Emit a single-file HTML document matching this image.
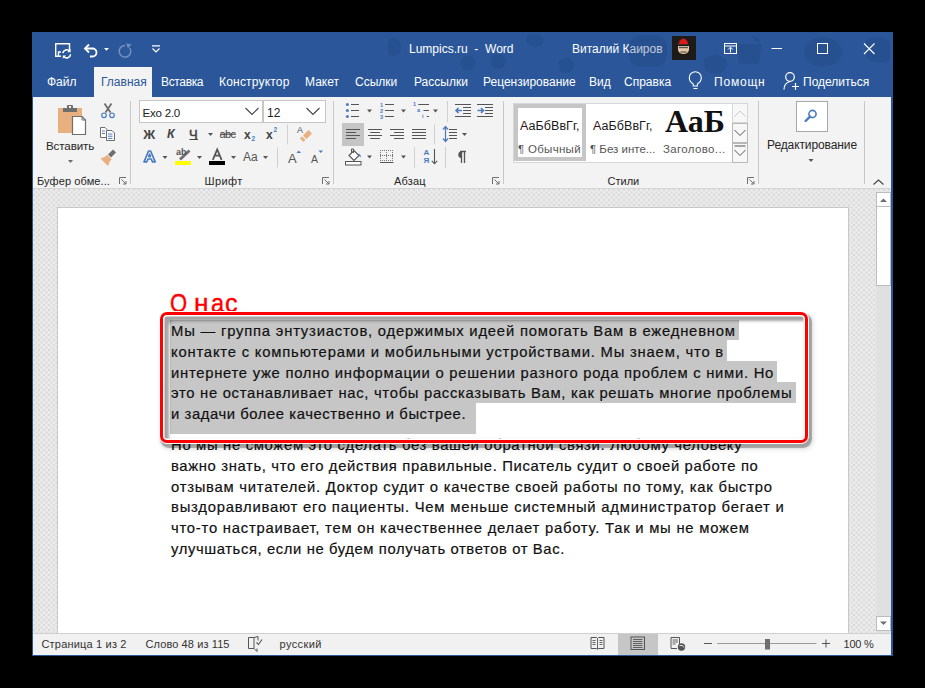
<!DOCTYPE html>
<html><head><meta charset="utf-8">
<style>
*{margin:0;padding:0;box-sizing:border-box}
html,body{width:925px;height:688px;overflow:hidden;background:#000;font-family:"Liberation Sans",sans-serif}
.a{position:absolute}
.t{position:absolute;white-space:nowrap;line-height:1}
#win{position:absolute;left:32px;top:32px;width:861px;height:624px;background:#2b579a;overflow:hidden}
svg{position:absolute;overflow:visible}
.L{font-size:14.8px;color:#111;transform-origin:0 0;-webkit-text-stroke:0.2px #111}
</style></head><body>
<div id="win"></div>

<!-- title bar -->
<div class="a" style="left:32px;top:32px;width:861px;height:65px;background:#2b579a"></div>
<div class="t" style="left:409px;top:43px;font-size:12px;color:#fff">Lumpics.ru&nbsp; -&nbsp; Word</div>
<div class="t" style="left:572px;top:43px;font-size:12px;color:#fff">Виталий Каиров</div>



<!-- title doodles -->
<svg style="left:0;top:0" width="925" height="688">
 <g fill="#1c3f78" opacity="0.28">
  <path d="M388 42 q3 -6 8 -3 q6 2 5 9 q-1 8 -7 8 q-8 0 -6 -14z"/>
  <path d="M462 58 q6 -5 12 0 q3 6 -1 11 q-6 3 -11 -1 q-3 -5 0 -10z"/>
  <path d="M492 56 q7 -4 13 1 q2 7 -2 11 q-7 2 -11 -2 q-2 -5 0 -10z"/>
  <path d="M528 35 q8 -3 14 2 q3 6 -2 9 q-7 3 -12 -2 q-3 -4 0 -9z"/>
  <path d="M560 60 q6 -4 12 0 q4 6 -1 12 q-6 3 -11 -1 q-3 -5 0 -11z"/>
  <rect x="629" y="35" width="38" height="32" rx="12"/>
  <path d="M705 58 q10 -6 20 0 q4 8 -2 14 q-9 4 -17 -1 q-4 -6 -1 -13z"/>
  <path d="M736 44 h26 l-3 20 h-20 z M752 36 q6 0 8 6 h-4 q-2 -3 -4 -6z"/>
  <ellipse cx="823" cy="52" rx="19" ry="15"/>
  <path d="M866 40 q12 -6 24 2 v18 q-12 6 -24 -2 z"/>
 </g>
</svg>

<!-- ===== QAT + title icons ===== -->
<svg style="left:0;top:0" width="925" height="688">
 <g fill="none" stroke="#fff" stroke-width="1.4">
  <!-- save w/ sync -->
  <path d="M61 56.3 H55.7 V43.7 H69.5 V50"/>
    <path d="M58.5 56.5 V52 H61"/>
 </g>
 <g fill="none" stroke="#fff" stroke-width="1.6">
  <path d="M62.8 53.2 a3.9 3.9 0 0 1 6.9 -2"/>
  <path d="M70.6 54.4 a3.9 3.9 0 0 1 -6.9 2"/>
 </g>
 <path d="M70.6 48.8 v3.4 h-3.4z M62.8 58.8 v-3.4 h3.4z" fill="#fff"/>
 <!-- undo -->
 <path d="M85.5 48.5 H92.5 a4 4 0 0 1 0 8 H90" fill="none" stroke="#fff" stroke-width="1.8"/>
 <path d="M89 44.5 L85 48.5 L89 52.5" fill="none" stroke="#fff" stroke-width="1.8"/>
 <path d="M104 48h5l-2.5 2.8z" fill="#fff"/>
 <!-- redo disabled -->
 <path d="M125 45.5 a5.8 5.8 0 1 0 4.8 2.6" fill="none" stroke="#6f8fc0" stroke-width="1.6"/>
 <path d="M126 43.2 L131.5 44.5 L128 48.5 Z" fill="#6f8fc0"/>
 <!-- customize -->
 <path d="M152 45.8h8M152.5 48.5 L156 52 L159.5 48.5" fill="none" stroke="#fff" stroke-width="1.2"/>
 <!-- avatar -->
 <rect x="672" y="36" width="24" height="24" fill="#1e1a18"/>
 <path d="M679 40 q4 -2 8 0 l2 5 h-12z" fill="#3a2a2a"/>
 <path d="M679 44 q1 -5 4.5 -5.5 q3.5 0.5 4.5 5.5z" fill="#e01818"/>
 <path d="M678 46 h11 v4 q-1 4 -5.5 4 q-4.5 0 -5.5 -4z" fill="#e6c8a8"/>
 <path d="M679 47.5h9" stroke="#555" stroke-width="1.4"/>
 <path d="M680.5 52h6" stroke="#3a3a3a" stroke-width="1"/>
 <!-- ribbon display options -->
 <rect x="724.5" y="43.5" width="12" height="10" fill="none" stroke="#fff" stroke-width="1"/>
 <path d="M724.5 46h12M730.5 52.5v-5M728.2 49.5l2.3 -2.3 2.3 2.3" fill="none" stroke="#fff" stroke-width="1"/>
 <!-- min / max / close -->
 <path d="M771.5 48.5h10.5" stroke="#fff" stroke-width="1"/>
 <rect x="817.5" y="43.5" width="10" height="10" fill="none" stroke="#fff" stroke-width="1"/>
 <path d="M864 43.5 L874.5 54 M874.5 43.5 L864 54" stroke="#fff" stroke-width="1.1"/>
 <!-- lightbulb -->
 <path d="M693.2 86 v-2 q-3.9 -2.6 -3.9 -6.3 a6 6 0 0 1 12 0 q0 3.7 -3.9 6.3 v2 z" fill="none" stroke="#fff" stroke-width="1.1"/>
 <path d="M693.5 88.5h4" stroke="#fff" stroke-width="1.1"/>
 <!-- person -->
 <circle cx="790" cy="77" r="4.3" fill="none" stroke="#fff" stroke-width="1.2"/>
 <path d="M784 89.5 q0 -6.5 6 -8" fill="none" stroke="#fff" stroke-width="1.2"/>
 <path d="M795.5 83v7M792 86.5h7" stroke="#fff" stroke-width="1.2"/>
</svg>

<!-- tabs -->
<div class="a" style="left:94px;top:67px;width:58px;height:31px;background:#f3f3f3"></div>
<div class="t" style="left:47px;top:76px;font-size:12px;color:#fff">Файл</div>
<div class="t" style="left:101px;top:76px;font-size:12px;color:#2b579a">Главная</div>
<div class="t" style="left:161px;top:76px;font-size:12px;color:#fff;letter-spacing:-0.35px">Вставка</div>
<div class="t" style="left:219px;top:76px;font-size:12px;color:#fff;letter-spacing:0.2px">Конструктор</div>
<div class="t" style="left:305px;top:76px;font-size:12px;color:#fff">Макет</div>
<div class="t" style="left:355px;top:76px;font-size:12px;color:#fff">Ссылки</div>
<div class="t" style="left:414px;top:76px;font-size:12px;color:#fff">Рассылки</div>
<div class="t" style="left:483px;top:76px;font-size:12px;color:#fff">Рецензирование</div>
<div class="t" style="left:589px;top:76px;font-size:12px;color:#fff">Вид</div>
<div class="t" style="left:624px;top:76px;font-size:12px;color:#fff">Справка</div>
<div class="t" style="left:714px;top:76px;font-size:12px;color:#fff;letter-spacing:0.8px">Помощн</div>
<div class="t" style="left:803px;top:76px;font-size:12px;color:#fff">Поделиться</div>

<!-- ribbon -->
<div class="a" style="left:33px;top:97px;width:858px;height:92px;background:#f3f3f3"></div>


<!-- ===== clipboard group ===== -->
<svg style="left:0;top:0" width="925" height="688">
 <!-- paste -->
 <rect x="58" y="108" width="24" height="25" fill="#e8b07f"/>
 <rect x="63" y="108" width="14" height="4" fill="#6e6e6e"/>
 <rect x="67" y="105" width="6" height="4" rx="1" fill="#6e6e6e"/>
 <rect x="69" y="106" width="2" height="2" fill="#f3f3f3"/>
 <path d="M72.5 116.5 H82 L85.5 120 V134.5 H72.5 Z" fill="#fff" stroke="#6e6e6e" stroke-width="1.2"/>
 <path d="M82 116.5 V120 H85.5" fill="none" stroke="#6e6e6e" stroke-width="1"/>
 <path d="M68 160 h5 l-2.5 3 z" fill="#6e6e6e"/>
 <!-- scissors -->
 <path d="M104.5 103.5 L110.5 112.5 M111.5 103.5 L105.5 112.5" stroke="#6e6e6e" stroke-width="1.8"/>
 <circle cx="104" cy="115.3" r="2.3" fill="none" stroke="#4a7bbf" stroke-width="1.2"/>
 <circle cx="112" cy="115.3" r="2.3" fill="none" stroke="#4a7bbf" stroke-width="1.2"/>
 <!-- copy -->
 <path d="M100.5 127.5 H105 L107.5 130 V137.5 H100.5 Z" fill="#fff" stroke="#6e6e6e" stroke-width="1"/>
 <path d="M106.5 130.5 H112 L114.5 133 V140.5 H106.5 Z" fill="#fff" stroke="#6e6e6e" stroke-width="1"/>
 <path d="M102 131h3M102 133.5h3M108 134h4.5M108 136.2h4.5M108 138.4h4.5" stroke="#4a7bbf" stroke-width="1"/>
 <!-- format painter -->
 <path d="M108 154.5 L113 149.6 L116 152.6 L111 157.5 Z" fill="#6e6e6e"/>
 <path d="M100.5 158.5 L105.5 156.5 L107 154.8 L111.7 159.5 L110 161 L108 166 Z" fill="#e8b07f"/>
 <!-- separators -->
 <path d="M130.5 101v83M333.5 101v83M503.5 101v83M758.5 101v83M864.5 101v83" stroke="#c8c8c8" stroke-width="1"/>
 <!-- launchers -->
 <g fill="none" stroke="#6e6e6e" stroke-width="1">
  <path d="M119.5 184V177.5H126"/><path d="M121.5 179.5L126 184M126 181v3h-3"/>
  <path d="M322.5 184V177.5H329"/><path d="M324.5 179.5L329 184M329 181v3h-3"/>
  <path d="M492.5 184V177.5H499"/><path d="M494.5 179.5L499 184M499 181v3h-3"/>
  <path d="M747.5 184V177.5H754"/><path d="M749.5 179.5L754 184M754 181v3h-3"/>
 </g>
 <!-- collapse ribbon -->
 <path d="M873.5 184.5 L878.5 180 L883.5 184.5" fill="none" stroke="#444" stroke-width="1.1"/>
</svg>
<div class="t" style="left:46px;top:140.3px;font-size:11.6px;color:#262626;letter-spacing:-0.12px">Вставить</div>
<div class="t" style="left:37px;top:176px;font-size:11px;color:#262626;letter-spacing:0.1px">Буфер обме...</div>
<div class="t" style="left:204.5px;top:176px;font-size:11px;color:#262626;letter-spacing:0.4px">Шрифт</div>
<div class="t" style="left:394px;top:176px;font-size:11px;color:#262626;letter-spacing:0.2px">Абзац</div>
<div class="t" style="left:607.5px;top:176px;font-size:11px;color:#262626;letter-spacing:0px">Стили</div>
<div class="t" style="left:767px;top:138.5px;font-size:12px;color:#262626;letter-spacing:-0.1px">Редактирование</div>


<!-- ===== font group ===== -->
<div class="a" style="left:139px;top:100px;width:124px;height:23px;background:#fff;border:1px solid #c6c6c6"></div>
<div class="a" style="left:263px;top:100px;width:63px;height:23px;background:#fff;border:1px solid #c6c6c6;border-left:1px solid #c6c6c6"></div>
<div class="t" style="left:142.5px;top:106.8px;font-size:11.6px;color:#222;letter-spacing:-0.25px">Exo 2.0</div>
<div class="t" style="left:267px;top:106.8px;font-size:12px;color:#222">12</div>
<svg style="left:0;top:0" width="925" height="688">
 <path d="M245.5 108 L252 114.5 L258.5 108 M306.5 108 L313 114.5 L319.5 108" fill="none" stroke="#444" stroke-width="1.1"/>
 <!-- dropdown arrows row2/3 -->
 <g fill="#555">
  <path d="M208 133h5l-2.5 3z"/>
  <path d="M162.5 156h5l-2.5 3z"/><path d="M197 156h5l-2.5 3z"/><path d="M231 156h5l-2.5 3z"/><path d="M263 156h5l-2.5 3z"/>
  <path d="M367 109.5h5l-2.5 3z"/><path d="M401 109.5h5l-2.5 3z"/><path d="M433 109.5h5l-2.5 3z"/>
  <path d="M462 133h5l-2.5 3z"/><path d="M367 155.5h5l-2.5 3z"/><path d="M401 155.5h5l-2.5 3z"/>
  <path d="M808.5 159h5l-2.5 3z"/>
 </g>
 <!-- small separators -->
 <path d="M287.5 124.5v20M277.5 147.5v20M447.5 101v21M434.5 124.5v20M414.5 147v21M445.5 147v21" stroke="#d0d0d0" stroke-width="1"/>
 <!-- underline Ч -->
 <path d="M189.5 139.5h8.5" stroke="#444" stroke-width="1"/>
 <!-- strikethrough -->
 <path d="M220 134.2h16" stroke="#444" stroke-width="1"/>
 <!-- highlight -->
 <rect x="175" y="161" width="16" height="4" fill="#ffff00"/>
 <path d="M180 159.5 L189.5 150.5" stroke="#6e6e6e" stroke-width="2.8"/>
 <!-- font color -->
 <rect x="209" y="161" width="16" height="4" fill="#000"/>
 <path d="M212.8 159.8 L217.2 149.5 L221.6 159.8 M214.6 155.6h5.2" fill="none" stroke="#555" stroke-width="1.8"/>
 <!-- text effects A -->
 <path d="M144 161.8 L148.6 151 H150.6 L155.2 161.8 H152.4 L151.3 159 H147.9 L146.8 161.8 Z M148.7 156.6 H150.5 L149.6 154.2 Z" fill="#fff" stroke="#4a7bbf" stroke-width="1.7" stroke-linejoin="round"/>
 <!-- grow / shrink triangles -->
 <path d="M296.5 153h4.5l-2.25-2.6z" fill="#4a7bbf"/>
 <path d="M318.5 150.4h4.5l-2.25 2.6z" fill="#4a7bbf"/>
 <!-- clear formatting eraser -->
 <path d="M303 135.5 L308.5 130 L312 133.5 L306.5 139 Z" fill="#e8b07f"/>
 <path d="M300 138.5 L302 136.5 L305.5 140 L303.5 142 Z" fill="#e8b07f"/>
</svg>
<div class="t" style="left:143.3px;top:127.6px;font-size:13.2px;font-weight:bold;color:#444">Ж</div>
<div class="t" style="left:167px;top:128px;font-size:12.5px;font-weight:bold;font-style:italic;color:#444">К</div>
<div class="t" style="left:189px;top:127.8px;font-size:13px;color:#444;-webkit-text-stroke:0.5px #444">Ч</div>
<div class="t" style="left:219.5px;top:129px;font-size:11px;color:#444;letter-spacing:-0.6px">abc</div>
<div class="t" style="left:244px;top:129px;font-size:12px;font-weight:bold;color:#444">x</div>
<div class="t" style="left:251.5px;top:135.5px;font-size:6.5px;font-weight:bold;color:#4a7bbf">2</div>
<div class="t" style="left:266px;top:129px;font-size:12px;font-weight:bold;color:#444">x</div>
<div class="t" style="left:273.5px;top:126.5px;font-size:6.5px;font-weight:bold;color:#4a7bbf">2</div>
<div class="t" style="left:297px;top:126px;font-size:9px;color:#555">A</div>
<div class="t" style="left:176px;top:148px;font-size:9px;font-weight:bold;color:#555">ab</div>
<div class="t" style="left:243px;top:151px;font-size:12px;color:#555">Aa</div>
<div class="t" style="left:288px;top:151.5px;font-size:13px;color:#555">A</div>
<div class="t" style="left:311px;top:154px;font-size:10.5px;color:#555">A</div>


<!-- ===== paragraph group ===== -->
<div class="a" style="left:342px;top:123px;width:22px;height:23px;background:#c5c5c5"></div>
<svg style="left:0;top:0" width="925" height="688">
 <g fill="#4a7bbf">
  <circle cx="347.4" cy="104.4" r="1.5"/><circle cx="347.4" cy="110.5" r="1.5"/><circle cx="347.4" cy="116.5" r="1.5"/>
 </g>
 <path d="M351 104.5h8M351 110.5h8M351 116.5h8 M385 104.5h9M385 110.5h9M385 116.5h9 M418.3 104.5h10.7M423.5 110.5h5.5M426.8 116.5h2.2" stroke="#555" stroke-width="1.1"/>
 <!-- align lines -->
 <path d="M346 129.5h14M346 132.5h10M346 135.5h14M346 138.5h10
          M368 129.5h14M370.2 132.5h9.7M368 135.5h14M370.2 138.5h9.7
          M390 129.5h14M394 132.5h10M390 135.5h14M394 138.5h10
          M412 129.5h14M412 132.5h14M412 135.5h14M412 138.5h14" stroke="#555" stroke-width="1"/>
 <!-- indent -->
 <path d="M455 104.5h16M463 107.5h8M463 110.5h8M463 113.5h8M455 116.5h16
          M477 104.5h16M485 107.5h8M485 110.5h8M485 113.5h8M477 116.5h16" stroke="#555" stroke-width="1"/>
 <path d="M462 110.5h-6M458.5 108l-2.5 2.5 2.5 2.5" fill="none" stroke="#4a7bbf" stroke-width="1.6"/>
 <path d="M477.5 110.5h6M481 108l2.5 2.5-2.5 2.5" fill="none" stroke="#4a7bbf" stroke-width="1.6"/>
 <!-- line spacing -->
 <path d="M445.5 127v14M443 129.5l2.5-3 2.5 3M443 138.5l2.5 3 2.5-3" fill="none" stroke="#4a7bbf" stroke-width="1.2"/>
 <path d="M449 129.5h8M449 132.5h8M449 135.5h8M449 138.5h8" stroke="#555" stroke-width="1"/>
 <!-- shading -->
 <path d="M349 155.5 L354 150.5 L359 155.5 L354 160.5 Z" fill="#fff" stroke="#555" stroke-width="1.1"/>
 <path d="M351.5 153v-4h2v4" fill="none" stroke="#555" stroke-width="1"/>
 <path d="M358.5 153.5 q3 1 2 4 q-1.5 -1 -2 -4z" fill="#4a7bbf"/>
 <rect x="345.5" y="161.5" width="15.5" height="3.5" fill="#fff" stroke="#555" stroke-width="1"/>
 <!-- borders -->
 <path d="M380 150.5h13M380 155.5h13M380 160.5h13M380.5 150v11M386.5 150v11M392.5 150v11" stroke="#777" stroke-width="1" stroke-dasharray="1 1"/>
 <path d="M380 162.5h13.5" stroke="#555" stroke-width="1"/>
 <!-- sort -->
 <path d="M434.5 149v14.5M431.8 160.8l2.7 3 2.7-3" fill="none" stroke="#555" stroke-width="1.1"/>
 <!-- pilcrow -->
 <path d="M460 151.5h6M461.5 151.5v11.5M464.5 151.5v11.5" stroke="#555" stroke-width="1.3"/>
 <path d="M461.5 151.5 a3.2 3.2 0 0 0 0 6.4z" fill="#555"/>
</svg>
<div class="t" style="left:380px;top:101.5px;font-size:5.6px;font-weight:bold;color:#4a7bbf;line-height:6px">1<br>2<br>3</div>
<div class="t" style="left:413px;top:101.5px;font-size:5.6px;font-weight:bold;color:#4a7bbf">1</div>
<div class="t" style="left:417px;top:107.5px;font-size:5.6px;font-weight:bold;color:#4a7bbf">a</div>
<div class="t" style="left:422px;top:113.5px;font-size:5.6px;font-weight:bold;color:#4a7bbf">i</div>
<div class="t" style="left:423.5px;top:148.5px;font-size:8px;font-weight:bold;color:#4a7bbf">A</div>
<div class="t" style="left:423.5px;top:157px;font-size:8px;font-weight:bold;color:#4a7bbf;">Я</div>

<!-- ===== styles group ===== -->
<div class="a" style="left:513px;top:103px;width:235px;height:60px;background:#fff;border:1px solid #d6d6d6"></div>
<div class="a" style="left:514px;top:104px;width:72px;height:57px;border:4px solid #c6c6c6"></div>
<div class="t" style="left:520px;top:120px;font-size:12.5px;color:#1a1a1a;letter-spacing:0.05px"><span style="color:#3a1010">А</span>аБбВвГг,</div>
<div class="t" style="left:518px;top:144px;font-size:11.5px;color:#555;letter-spacing:0.3px">¶ Обычный</div>
<div class="t" style="left:593px;top:120px;font-size:12.5px;color:#1a1a1a;letter-spacing:0.05px"><span style="color:#3a1010">А</span>аБбВвГг,</div>
<div class="t" style="left:590px;top:144px;font-size:11.5px;color:#555">¶ Без инте...</div>
<div class="t" style="left:665px;top:104.5px;font-size:32px;font-family:'Liberation Serif',serif;font-weight:bold;color:#111">АаБ</div>
<div class="t" style="left:663px;top:144px;font-size:11.5px;color:#555;letter-spacing:0.35px">Заголово...</div>
<div class="a" style="left:732px;top:103px;width:16px;height:20px;background:#f7f7f7;border:1px solid #d6d6d6"></div>
<div class="a" style="left:732px;top:123px;width:16px;height:20px;background:#f7f7f7;border:1px solid #b8b8b8"></div>
<div class="a" style="left:732px;top:143px;width:16px;height:20px;background:#f7f7f7;border:1px solid #b8b8b8"></div>
<svg style="left:0;top:0" width="925" height="688">
 <path d="M734.5 116.5 L740 111 L745.5 116.5" fill="none" stroke="#c8c8c8" stroke-width="1"/>
 <path d="M734.5 130 L740 135.5 L745.5 130" fill="none" stroke="#555" stroke-width="1"/>
 <path d="M734.5 146h11M734.5 150 L740 155.5 L745.5 150" fill="none" stroke="#555" stroke-width="1"/>
</svg>

<!-- ===== editing group ===== -->
<div class="a" style="left:796px;top:101px;width:32px;height:31px;background:#fff;border:1px solid #a8a8a8"></div>
<svg style="left:0;top:0" width="925" height="688">
 <circle cx="812.5" cy="114" r="3.6" fill="none" stroke="#4a7bbf" stroke-width="1.6"/>
 <path d="M810 116.6 L805.6 121" stroke="#4a7bbf" stroke-width="2.4" stroke-linecap="round"/>
</svg>

<!-- doc area -->
<div class="a" style="left:33px;top:189px;width:858px;height:444px;background-color:#eaeaea;background-image:radial-gradient(circle at 1px 1px,#dadada 0.8px,transparent 1px),radial-gradient(circle at 1px 1px,#dadada 0.8px,transparent 1px);background-size:5px 5px,5px 5px;background-position:0 0,2.5px 2.5px"></div>
<div class="a" style="left:33px;top:188px;width:858px;height:1px;background:#d4d4d4"></div>
<div class="a" style="left:57px;top:207px;width:792px;height:426px;background:#fff;border:1px solid #c8c8c8;border-bottom:none"></div>

<!-- status bar base -->
<div class="a" style="left:33px;top:633px;width:858px;height:22px;background:#f1f1f1;border-top:1px solid #d0d0d0"></div>


<!-- ===== scrollbar ===== -->
<div class="a" style="left:876px;top:192px;width:15px;height:441px;background:#e0e0e0"></div>
<div class="a" style="left:876px;top:192px;width:15px;height:15px;background:#fff;border:1px solid #bcbcbc"></div>
<div class="a" style="left:876px;top:206px;width:15px;height:80px;background:#fff;border:1px solid #bcbcbc"></div>
<div class="a" style="left:876px;top:616px;width:15px;height:15px;background:#fff;border:1px solid #bcbcbc"></div>
<svg style="left:0;top:0" width="925" height="688">
 <path d="M880 202h7l-3.5 -3.5z" fill="#6e6e6e"/>
 <path d="M880 621.5h7l-3.5 3.5z" fill="#6e6e6e"/>
</svg>

<!-- ===== document text ===== -->
<div class="a" id="h1" style="left:0;top:0;width:925px;height:311px;overflow:hidden;color:#ff0000;font-size:21px;-webkit-text-stroke:0.35px #ff0000">
<div class="t" style="left:170.3px;top:289.5px;transform:scale(1.05,1.22);transform-origin:0 0">О</div>
<div class="t" style="left:194.4px;top:289.5px;transform:scale(1.25,1.22);transform-origin:0 0">н</div>
<div class="t" style="left:210.8px;top:289.5px;transform:scale(1.12,1.22);transform-origin:0 0">а</div>
<div class="t" style="left:224.8px;top:289.5px;transform:scale(1.2,1.22);transform-origin:0 0">с</div>
</div>
<div class="a" style="left:170px;top:319.6px;width:569px;height:20.8px;background:#c6c6c6"></div>
<div class="a" style="left:170px;top:340.4px;width:556.7px;height:20.9px;background:#c6c6c6"></div>
<div class="a" style="left:170px;top:361.3px;width:606.8px;height:20.8px;background:#c6c6c6"></div>
<div class="a" style="left:170px;top:382.1px;width:626px;height:20.9px;background:#c6c6c6"></div>
<div class="a" style="left:170px;top:403px;width:305.7px;height:30.6px;background:#c6c6c6"></div>
<div id="body">
<div class="t L" style="left:171px;top:323.82px;letter-spacing:0.800px">Мы — группа энтузиастов, одержимых идеей помогать Вам в ежедневном</div>
<div class="t L" style="left:171px;top:344.62px;letter-spacing:0.805px">контакте с компьютерами и мобильными устройствами. Мы знаем, что в</div>
<div class="t L" style="left:171px;top:365.52px;letter-spacing:0.730px">интернете уже полно информации о решении разного рода проблем с ними. Но</div>
<div class="t L" style="left:171px;top:386.32px;letter-spacing:0.708px">это не останавливает нас, чтобы рассказывать Вам, как решать многие проблемы</div>
<div class="t L" style="left:171px;top:407.22px;letter-spacing:0.584px">и задачи более качественно и быстрее.</div>
<div class="t L" style="left:171px;top:437.82px;letter-spacing:0.690px">Но мы не сможем это сделать без вашей обратной связи. Любому человеку</div>
<div class="t L" style="left:171px;top:458.72px;letter-spacing:0.650px">важно знать, что его действия правильные. Писатель судит о своей работе по</div>
<div class="t L" style="left:171px;top:479.52px;letter-spacing:0.751px">отзывам читателей. Доктор судит о качестве своей работы по тому, как быстро</div>
<div class="t L" style="left:171px;top:500.42px;letter-spacing:0.785px">выздоравливают его пациенты. Чем меньше системный администратор бегает и</div>
<div class="t L" style="left:171px;top:521.22px;letter-spacing:0.767px">что-то настраивает, тем он качественнее делает работу. Так и мы не можем</div>
<div class="t L" style="left:171px;top:542.12px;letter-spacing:0.607px">улучшаться, если не будем получать ответов от Вас.</div>
</div>

<!-- ===== annotation box ===== -->
<div class="a" style="left:160px;top:312px;width:648px;height:131px;border:3px solid #ff0000;border-radius:7px;box-shadow:0 0 0 1px rgba(255,255,255,.95), 2px 3px 1px 2px rgba(0,0,0,.30), 3px 4px 4px 3px rgba(0,0,0,.10), inset 0 0 0 1.5px #fff, inset 7px 7px 3px -1px rgba(0,0,0,.36), inset -2px -2px 3px -1px rgba(0,0,0,.12)"></div>

<!-- ===== status bar ===== -->
<div class="t" style="left:41.5px;top:639px;font-size:11px;color:#333;letter-spacing:0.18px">Страница 1 из 2</div>
<div class="t" style="left:145.5px;top:639px;font-size:11px;color:#333;letter-spacing:0.1px">Слово 48 из 115</div>
<div class="t" style="left:279.5px;top:639px;font-size:11px;color:#333;letter-spacing:0.4px">русский</div>
<div class="a" style="left:618px;top:634px;width:40px;height:21px;background:#c6c6c6"></div>
<div class="t" style="left:843.5px;top:639px;font-size:11px;color:#333;letter-spacing:-0.2px">100 %</div>
<svg style="left:0;top:0" width="925" height="688">
 <!-- proofing -->
 <path d="M248.5 637.5h5.5v11h-5.5z" fill="none" stroke="#555" stroke-width="1"/>
 <path d="M254 637.5l4 -1v4M254 648.5l3 3v-3" fill="none" stroke="#555" stroke-width="1"/>
 <path d="M256.5 642.5l2 2 3.5 -5" fill="none" stroke="#555" stroke-width="1.1"/>
 <!-- read mode -->
 <path d="M591 637.5h5.5l1 1 1-1h5.5v11h-5.5l-1 1-1-1h-5.5z" fill="none" stroke="#555" stroke-width="1"/>
 <path d="M597.5 638v11M592.5 640.5h3M592.5 642.5h3M592.5 644.5h3M599.5 640.5h3M599.5 642.5h3M599.5 644.5h3" stroke="#555" stroke-width="0.9"/>
 <!-- print layout -->
 <rect x="631" y="637" width="13.5" height="12.5" fill="none" stroke="#555" stroke-width="1"/>
 <path d="M633 639.5h9.5M633 641.5h9.5M633 643.5h9.5M633 645.5h9.5M633 647.5h9.5" stroke="#555" stroke-width="0.9"/>
 <!-- web layout -->
 <path d="M679.5 644 V637.5 H671 V648.5 H677" fill="none" stroke="#555" stroke-width="1"/>
 <path d="M672.5 640h5.5M672.5 642h5.5M672.5 644h3" stroke="#555" stroke-width="0.9"/>
 <circle cx="681.5" cy="647" r="3.7" fill="#555"/>
 <path d="M679.5 645.5h3l1.5 2" stroke="#f1f1f1" stroke-width="0.9" fill="none"/>
 <!-- zoom slider -->
 <path d="M704 643.5h8M822 643.5h8M826 639.5v8" stroke="#555" stroke-width="1"/><path d="M717 643.5h99.5" stroke="#9a9a9a" stroke-width="1"/>
 <rect x="765" y="639" width="5" height="10.5" fill="#6e6e6e"/>
</svg>

</body></html>
